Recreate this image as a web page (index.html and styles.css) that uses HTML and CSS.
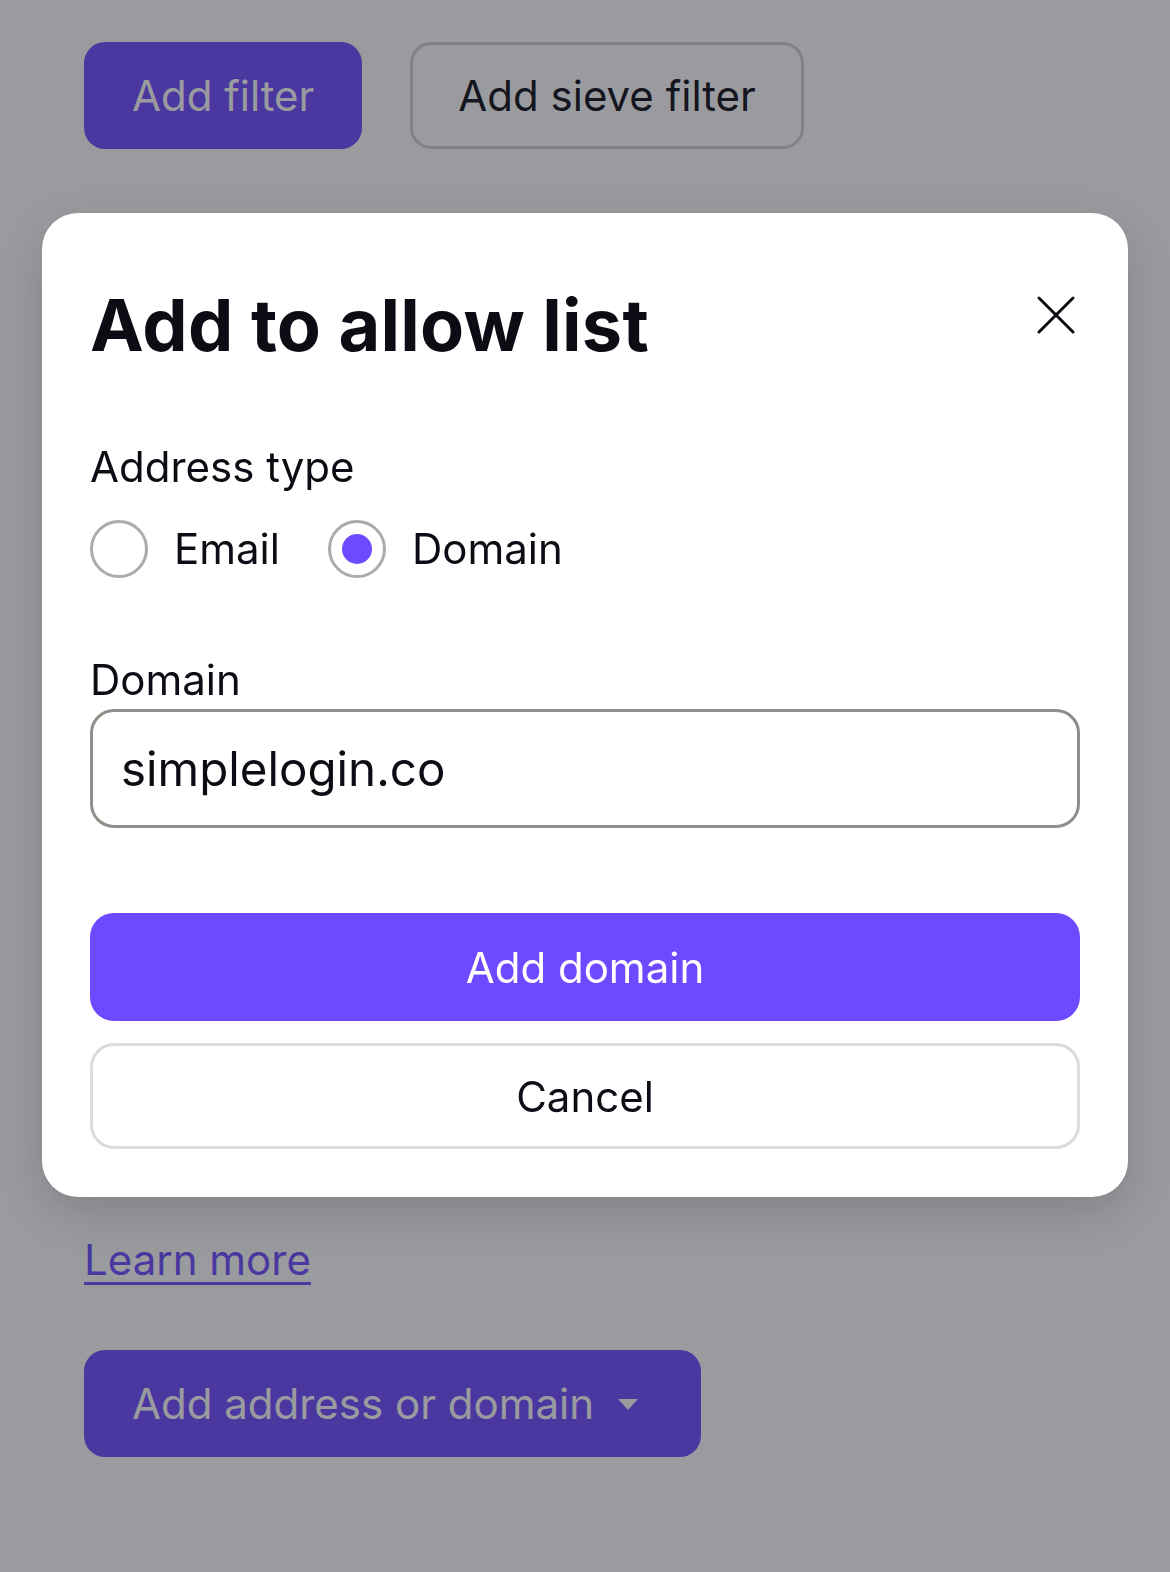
FILE: index.html
```html
<!DOCTYPE html>
<html lang="en">
<head>
<meta charset="utf-8">
<title>Add to allow list</title>
<link rel="stylesheet" href="styles.css">
</head>
<body>
<main class="page">
  <div class="actions">
    <button class="btn btn-primary" type="button">Add filter</button>
    <button class="btn btn-outline" type="button">Add sieve filter</button>
  </div>
  <div class="covered" aria-hidden="true"></div>
  <p class="learn"><a class="link" href="#">Learn more</a></p>
  <button class="btn btn-primary btn-dropdown" type="button">
    <span>Add address or domain</span>
    <svg class="caret" viewBox="0 0 36 36" width="36" height="36" aria-hidden="true"><path d="M8 13h20l-10 11z" fill="currentColor"/></svg>
  </button>
</main>

<div class="backdrop">
  <div class="modal" role="dialog" aria-labelledby="modal-title">
    <div class="modal-header">
      <h1 id="modal-title" class="modal-title">Add to allow list</h1>
      <button class="close" type="button" aria-label="Close">
        <svg viewBox="0 0 44 44" width="44" height="44" aria-hidden="true"><path d="M5 5L39 39M39 5L5 39" stroke="currentColor" stroke-width="3" stroke-linecap="round"/></svg>
      </button>
    </div>

    <div class="field-label">Address type</div>
    <div class="radios">
      <label class="radio"><span class="radio-circle"></span><span>Email</span></label>
      <label class="radio"><span class="radio-circle checked"></span><span>Domain</span></label>
    </div>

    <div class="field-label domain-label">Domain</div>
    <div class="input">simplelogin.co</div>

    <div class="modal-actions">
      <button class="mbtn mbtn-primary" type="button">Add domain</button>
      <button class="mbtn mbtn-outline" type="button">Cancel</button>
    </div>
  </div>
</div>
</body>
</html>
```

FILE: styles.css
```css
* { box-sizing: border-box; }

html, body {
  margin: 0;
  padding: 0;
}

body {
  background: #ffffff;
  font-family: Inter, "Noto Sans", "Liberation Sans", sans-serif;
  color: #0c0c14;
  width: 1170px;
  height: 1572px;
  overflow: hidden;
}

.page {
  padding: 42px 84px;
}

.actions {
  display: flex;
  gap: 48px;
}

.btn {
  font-family: inherit;
  font-size: 42px;
  line-height: 50px;
  height: 107px;
  padding: 0 45px;
  border-radius: 21px;
  border: 3px solid transparent;
  display: inline-flex;
  align-items: center;
  cursor: pointer;
}

.btn-primary {
  background: #6d4aff;
  color: #ffffff;
}

.btn-outline {
  background: #ffffff;
  color: #0c0c14;
  border-color: #d1cfcd;
}

.covered {
  height: 1079px;
}

.learn {
  margin: 0;
  font-size: 42px;
  line-height: 63px;
}

.link {
  color: #6d4aff;
  text-decoration: underline;
  text-decoration-thickness: 3px;
  text-underline-offset: 7px;
}

.btn-dropdown {
  margin-top: 59px;
  gap: 16px;
  padding-right: 52px;
}

.caret {
  display: block;
}

/* Modal */
.backdrop {
  position: fixed;
  inset: 0;
  background: rgba(32, 34, 43, 0.45);
  display: flex;
  align-items: flex-start;
  padding: 213px 42px 0;
}

.modal {
  width: 100%;
  background: #ffffff;
  border-radius: 36px;
  padding: 72px 48px 48px;
  box-shadow: 0 16px 48px rgba(0, 0, 0, 0.16);
}

.modal-header {
  display: flex;
  justify-content: space-between;
  align-items: flex-start;
}

.modal-title {
  margin: 0;
  font-size: 72px;
  line-height: 80px;
  font-weight: 700;
  letter-spacing: 0.25px;
  color: #0c0c14;
}

.close {
  background: none;
  border: 0;
  padding: 0;
  margin: 8px 2px 0 0;
  color: #0c0c14;
  cursor: pointer;
}

.close svg { display: block; }

.field-label {
  margin-top: 77px;
  font-size: 42px;
  line-height: 50px;
  color: #0c0c14;
}

.radios {
  margin-top: 28px;
  display: flex;
  align-items: center;
  gap: 48px;
}

.radio {
  display: flex;
  align-items: center;
  gap: 26px;
  font-size: 42px;
  line-height: 58px;
}

.radio-circle {
  width: 58px;
  height: 58px;
  border-radius: 50%;
  border: 3px solid #adaba8;
  display: flex;
  align-items: center;
  justify-content: center;
}

.radio-circle.checked::after {
  content: "";
  width: 30px;
  height: 30px;
  border-radius: 50%;
  background: #6d4aff;
}

.domain-label {
  margin-top: 77px;
}

.input {
  margin-top: 4px;
  height: 119px;
  border: 3px solid #8f8e89;
  border-radius: 24px;
  padding: 0 28px;
  display: flex;
  align-items: center;
  font-size: 47.5px;
  color: #0c0c14;
}

.modal-actions {
  margin-top: 85px;
  display: flex;
  flex-direction: column;
  gap: 22px;
}

.mbtn {
  font-family: inherit;
  font-size: 42px;
  width: 100%;
  border-radius: 24px;
  cursor: pointer;
}

.mbtn-primary {
  height: 108px;
  background: #6d4aff;
  color: #ffffff;
  border: 0;
}

.mbtn-outline {
  height: 106px;
  background: #ffffff;
  color: #0c0c14;
  border: 3px solid #dedbd8;
}
```
